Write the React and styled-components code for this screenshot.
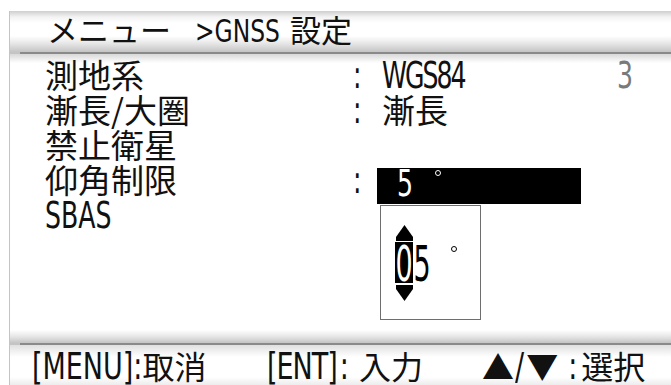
import React from "react";
import styled, { createGlobalStyle } from "styled-components";

const GlobalStyle = createGlobalStyle`
  html, body {
    margin: 0;
    padding: 0;
    background: #ffffff;
  }
  body {
    font-family: "Noto Sans CJK JP", "Noto Sans", sans-serif;
    color: #111111;
  }
`;

const Screen = styled.div`
  width: 671px;
  height: 385px;
  padding: 11px 0 0 9px;
  box-sizing: border-box;
  overflow: hidden;
`;

const Panel = styled.div`
  height: 374px;
  border-left: 1px solid #a8cbe9;
  display: flex;
  flex-direction: column;
`;

const Header = styled.div`
  height: 41px;
  padding-left: 37px;
  font-size: 31px;
  line-height: 35px;
  white-space: nowrap;
  background: linear-gradient(
    to bottom,
    #cfcfcf 0,
    #f3f3f3 6px,
    #ffffff 12px,
    #ffffff 25px,
    #e8e8e8 32px,
    #c4c4c4 41px
  );
`;

const Divider = styled.div`
  height: 2px;
  flex: none;
  background: linear-gradient(to right, #c4c4c4 10px, #8a8a8a 10px);
`;

/* narrow, tall latin face used by the device */
const Latin = styled.span`
  display: inline-block;
  font-family: "DejaVu Sans Condensed", "Liberation Sans Narrow", "Liberation Sans", sans-serif;
  font-size: ${(p) => p.$size || 28}px;
  letter-spacing: ${(p) => p.$ls || 0}px;
  line-height: 1;
  transform: scaleY(${(p) => p.$sy || 1.3});
  transform-origin: 0 85%;
  margin-left: ${(p) => p.$ml || 0}px;
  margin-right: ${(p) => p.$mr || 0}px;
  margin-top: ${(p) => p.$mt || 0}px;
`;

const Body = styled.div`
  flex: 1;
  display: grid;
  grid-template-columns: 308px 29px 235px auto;
  grid-auto-rows: 35px;
  align-content: start;
  padding: 3px 0 0 35px;
  font-size: 33px;
  line-height: 35px;
  white-space: nowrap;
  background:
    linear-gradient(to bottom, #d8d8d8 0, #ffffff 9px) top / 100% 9px no-repeat,
    linear-gradient(to bottom, #ffffff 0, #e4e4e4 7px, #c4c4c4 13px) bottom / 100% 13px no-repeat,
    #ffffff;
`;

const Label = styled.div`
  grid-column: 1;
`;

const Colon = styled.div`
  grid-column: 2;
`;

const Value = styled.div`
  grid-column: 3;
  position: relative;
`;

const Extra = styled.div`
  grid-column: 4;
  color: #7a7a7a;
`;

const SelectBar = styled.div`
  position: absolute;
  left: -5px;
  top: 6px;
  width: 204px;
  height: 36px;
  background: #000000;
  color: #ffffff;
  padding-left: 20px;
  box-sizing: border-box;
  display: flex;
  align-items: flex-start;
`;

const Degree = styled.span`
  display: block;
  flex: none;
  width: 4px;
  height: 4px;
  border: 1.5px solid ${(p) => p.$color || "#000"};
  border-radius: 50%;
  margin-left: ${(p) => p.$ml}px;
  margin-top: ${(p) => p.$mt}px;
`;

const Popup = styled.div`
  position: absolute;
  left: -2px;
  top: 43px;
  width: 101px;
  height: 115px;
  box-sizing: border-box;
  border: 1px solid #6e6e6e;
  background: #ffffff;
  padding: 19px 0 0 14px;
  display: flex;
  align-items: flex-start;
`;

const SpinCol = styled.div`
  display: flex;
  flex-direction: column;
  align-items: center;
  width: 18px;
`;

const Arrow = styled.svg`
  display: block;
  width: 17px;
  height: 16px;
  margin: ${(p) => (p.$down ? "2px 0 0" : "0 0 1px")};
`;

const Digit = styled.div`
  width: 18px;
  height: 41px;
  line-height: 51px;
  text-align: center;
  background: ${(p) => (p.$active ? "#000" : "transparent")};
  color: ${(p) => (p.$active ? "#fff" : "#000")};
  margin-top: ${(p) => p.$mt || 0}px;
`;

const Footer = styled.div`
  height: 40px;
  flex: none;
  display: grid;
  grid-template-columns: 235px 215px auto;
  padding: 0 0 0 22px;
  box-sizing: border-box;
  font-size: 32px;
  line-height: 40px;
  white-space: nowrap;
  background: linear-gradient(
    to bottom,
    #e0e0e0 0,
    #ffffff 12px,
    #ffffff 32px,
    #ececec 40px
  );
`;

const Key = styled.div`
  display: flex;
  align-items: baseline;
`;

const UpArrow = () => (
  <Arrow viewBox="0 0 17 16">
    <polygon points="8.5,0 17,12 17,16 0,16 0,12" fill="#000" />
  </Arrow>
);

const DownArrow = () => (
  <Arrow viewBox="0 0 17 16" $down>
    <polygon points="0,0 17,0 17,4 8.5,16 0,4" fill="#000" />
  </Arrow>
);

const App = () => {
  return (
    <>
      <GlobalStyle />
      <Screen>
        <Panel>
          <Header>
            メニュー
            <Latin $size={26} $sy={1.2} $ml={24} $mr={10}>
              &gt;GNSS
            </Latin>
            設定
          </Header>
          <Divider />
          <Body>
            <Label>測地系</Label>
            <Colon>
              <Latin>:</Latin>
            </Colon>
            <Value>
              <Latin $ls={-2}>WGS84</Latin>
            </Value>
            <Extra>
              <Latin>3</Latin>
            </Extra>

            <Label>漸長/大圏</Label>
            <Colon>
              <Latin>:</Latin>
            </Colon>
            <Value>漸長</Value>

            <Label>禁止衛星</Label>

            <Label>仰角制限</Label>
            <Colon>
              <Latin>:</Latin>
            </Colon>
            <Value>
              <SelectBar>
                <Latin $mt={5}>5</Latin>
                <Degree $color="#fff" $ml={22} $mt={2} />
              </SelectBar>
              <Popup>
                <SpinCol>
                  <UpArrow />
                  <Digit $active>
                    <Latin $size={30} $sy={1.65}>0</Latin>
                  </Digit>
                  <DownArrow />
                </SpinCol>
                <Digit $mt={17}>
                  <Latin $size={30} $sy={1.65}>5</Latin>
                </Digit>
                <Degree $ml={20} $mt={21} />
              </Popup>
            </Value>

            <Label>
              <Latin>SBAS</Latin>
            </Label>
          </Body>
          <Divider />
          <Footer>
            <Key>
              <Latin $size={30} $sy={1.25}>[MENU]:</Latin>取消
            </Key>
            <Key>
              <Latin $size={30} $sy={1.25} $ls={-1}>[ENT]</Latin>
              <Latin $size={30} $sy={1.25} $ml={3} $mr={10}>:</Latin>入力
            </Key>
            <Key>
              ▲<Latin $size={30} $sy={1.25} $ml={1} $mr={2}>/</Latin>▼
              <Latin $size={30} $sy={1.25} $ml={10} $mr={4}>:</Latin>選択
            </Key>
          </Footer>
        </Panel>
      </Screen>
    </>
  );
};

export default App;
